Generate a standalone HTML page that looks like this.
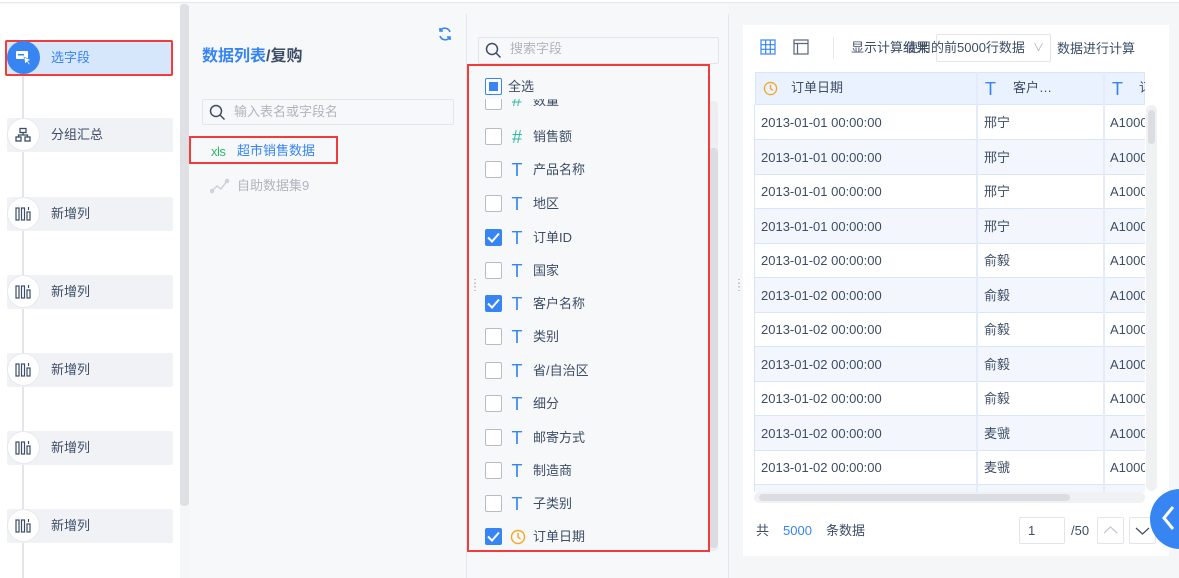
<!DOCTYPE html>
<html><head><meta charset="utf-8"><style>
*{margin:0;padding:0;box-sizing:border-box}
body{width:1179px;height:578px;overflow:hidden;background:#f5f6f8;font-family:"Liberation Sans","Noto Sans CJK SC",sans-serif;font-size:13px;line-height:16px;color:#3d4d66;position:relative}
.a{position:absolute}
.step{position:absolute;left:7px;width:166px;height:34px;background:#f1f2f6;border-radius:2px}
.step span{position:absolute;left:44px;top:9px;font-size:13px;color:#3d4d66}
.circ{position:absolute;left:7px;width:33px;height:33px;border-radius:50%;background:#fff;border:1px solid #e6e8ee}
.cb{position:absolute;left:485px;width:17px;height:17px;border:1px solid #b8bcc6;border-radius:2px;background:#fff}
.cb.on{background:#3685f2;border-color:#3685f2}
.fi{position:absolute;left:510px;font-size:18px;line-height:20px;color:#3685f2;width:14px;text-align:center}
.ft{position:absolute;left:533px;font-size:13px;color:#3d4d66}
.row{position:absolute;left:755px;width:390px;height:35px;border-bottom:1px solid #d9e6f7;font-size:13px;color:#3d4d66}
.row div{position:absolute;top:10px}
</style></head><body>
<div class="a" style="left:0;top:0;width:1179px;height:3px;background:#fff;border-bottom:1px solid #e6e8ee"></div>
<div class="a" style="left:0;top:4px;width:180px;height:574px;background:#fff"></div>
<div class="a" style="left:22px;top:70px;width:2px;height:508px;background:#e3e5ea"></div>
<div class="a" style="left:180px;top:4px;width:9px;height:502px;background:#dfe0e4;border-radius:4px"></div>
<div class="step" style="top:40px;background:#d6e6fb;border:2px solid #f23b3b;left:5px;width:168px;height:36px"><span style="color:#3685f2;left:44px;top:8px">选字段</span></div>
<div class="a" style="left:7px;top:41px;width:33px;height:33px;border-radius:50%;background:#3685f2"></div>
<svg class="a" style="left:15px;top:49px" width="18" height="18" viewBox="0 0 18 18"><rect x="1" y="2" width="12" height="8" rx="1" fill="#fff"/><rect x="3" y="5" width="6" height="1.5" fill="#3685f2"/><path d="M9 8l7 3-3 1 2 3-1 1-2-3-2 2z" fill="#fff" stroke="#3685f2" stroke-width=".6"/></svg>
<div class="step" style="top:118px"><span>分组汇总</span></div>
<div class="circ" style="top:118px"></div>
<svg class="a" style="left:15px;top:127px" width="16" height="16" viewBox="0 0 16 16" fill="none" stroke="#3d4d66" stroke-width="1.3"><rect x="5" y="1.5" width="6" height="4"/><rect x="1" y="10" width="5" height="4"/><rect x="10" y="10" width="5" height="4"/><path d="M3.5 10V8h9v2M8 5.5V8"/></svg>
<div class="step" style="top:197px"><span>新增列</span></div>
<div class="step" style="top:275px"><span>新增列</span></div>
<div class="step" style="top:353px"><span>新增列</span></div>
<div class="step" style="top:431px"><span>新增列</span></div>
<div class="step" style="top:509px"><span>新增列</span></div>
<div class="circ" style="top:197px"></div><div class="circ" style="top:275px"></div><div class="circ" style="top:353px"></div><div class="circ" style="top:431px"></div><div class="circ" style="top:509px"></div>
<svg class="a" style="left:15px;top:206px" width="17" height="16" viewBox="0 0 17 16" fill="none" stroke="#3d4d66" stroke-width="1.2"><rect x="1" y="2" width="3" height="12"/><rect x="6.5" y="2" width="3" height="12"/><rect x="12" y="6" width="3" height="8"/><path d="M13.5 1v3"/></svg>
<svg class="a" style="left:15px;top:284px" width="17" height="16" viewBox="0 0 17 16" fill="none" stroke="#3d4d66" stroke-width="1.2"><rect x="1" y="2" width="3" height="12"/><rect x="6.5" y="2" width="3" height="12"/><rect x="12" y="6" width="3" height="8"/><path d="M13.5 1v3"/></svg>
<svg class="a" style="left:15px;top:362px" width="17" height="16" viewBox="0 0 17 16" fill="none" stroke="#3d4d66" stroke-width="1.2"><rect x="1" y="2" width="3" height="12"/><rect x="6.5" y="2" width="3" height="12"/><rect x="12" y="6" width="3" height="8"/><path d="M13.5 1v3"/></svg>
<svg class="a" style="left:15px;top:440px" width="17" height="16" viewBox="0 0 17 16" fill="none" stroke="#3d4d66" stroke-width="1.2"><rect x="1" y="2" width="3" height="12"/><rect x="6.5" y="2" width="3" height="12"/><rect x="12" y="6" width="3" height="8"/><path d="M13.5 1v3"/></svg>
<svg class="a" style="left:15px;top:518px" width="17" height="16" viewBox="0 0 17 16" fill="none" stroke="#3d4d66" stroke-width="1.2"><rect x="1" y="2" width="3" height="12"/><rect x="6.5" y="2" width="3" height="12"/><rect x="12" y="6" width="3" height="8"/><path d="M13.5 1v3"/></svg>
<div class="a" style="left:190px;top:4px;width:276px;height:574px;background:#f7f8fa"></div>
<div class="a" style="left:466px;top:14px;width:1px;height:564px;background:#e6e8ee"></div>
<svg class="a" style="left:437px;top:26px" width="16" height="16" viewBox="0 0 16 16" fill="none" stroke="#3685f2" stroke-width="1.6"><path d="M13 6a5.5 5.5 0 0 0-10-1M3 10a5.5 5.5 0 0 0 10 1"/><path d="M3 2v3h3M13 14v-3h-3"/></svg>
<div class="a" style="left:202px;top:47px;font-size:16px;line-height:20px;font-weight:bold;color:#3685f2">数据列表<span style="color:#3d4d66">/复购</span></div>
<div class="a" style="left:202px;top:99px;width:252px;height:26px;border:1px solid #e3e5ea;background:#f7f8fa;border-radius:2px"></div>
<svg class="a" style="left:209px;top:104px" width="17" height="17" viewBox="0 0 17 17" fill="none" stroke="#3d4d66" stroke-width="1.5"><circle cx="7" cy="7" r="5.5"/><path d="M11 11l4.5 4.5"/></svg>
<div class="a" style="left:234px;top:104px;color:#b0b4bd">输入表名或字段名</div>
<div class="a" style="left:189px;top:136px;width:149px;height:28px;border:2px solid #f23b3b"></div>
<div class="a" style="left:211px;top:144px;font-size:13px;color:#2fb96a;letter-spacing:-0.5px">xls</div>
<div class="a" style="left:237px;top:143px;color:#3685f2">超市销售数据</div>
<svg class="a" style="left:210px;top:178px" width="20" height="16" viewBox="0 0 20 16" fill="none" stroke="#cfd2d8" stroke-width="1.5"><path d="M2 13l5-5 4 3 6-8"/><circle cx="2" cy="13" r="1.5" fill="#cfd2d8"/><circle cx="17" cy="3" r="1.5" fill="#cfd2d8"/></svg>
<div class="a" style="left:237px;top:178px;color:#b0b4bd">自助数据集9</div>
<div class="a" style="left:467px;top:4px;width:262px;height:574px;background:#f7f8fa"></div>
<div class="a" style="left:728px;top:14px;width:1px;height:564px;background:#e6e8ee"></div>
<div class="a" style="left:478px;top:37px;width:241px;height:27px;border:1px solid #e3e5ea;border-radius:2px"></div>
<svg class="a" style="left:485px;top:42px" width="17" height="17" viewBox="0 0 17 17" fill="none" stroke="#3d4d66" stroke-width="1.5"><circle cx="7" cy="7" r="5.5"/><path d="M11 11l4.5 4.5"/></svg>
<div class="a" style="left:510px;top:41px;color:#b0b4bd">搜索字段</div>
<div class="a" style="left:709px;top:101px;width:9px;height:450px;background:#eceef1;border-radius:4px"></div>
<div class="a" style="left:709px;top:148px;width:9px;height:400px;background:#dcdde2;border-radius:4px"></div>
<div class="a" style="left:467px;top:64px;width:243px;height:488px;border:2px solid #f23b3b"></div>
<div class="cb" style="top:78px;border-color:#3685f2"></div><div class="a" style="left:489px;top:82px;width:9px;height:9px;background:#3685f2"></div>
<div class="ft" style="left:508px;top:79px">全选</div>
<div class="a" style="left:469px;top:99px;width:239px;height:15px;overflow:hidden"><div class="cb" style="left:16px;top:-6px"></div><div class="fi" style="left:41px;top:-9px;color:#2fb9a0">#</div><div class="ft" style="left:64px;top:-6px">数量</div></div>
<div class="cb" style="top:128px"></div><div class="fi" style="top:127px;color:#2fb9a0">#</div><div class="ft" style="top:129px">销售额</div>
<div class="cb" style="top:161px"></div><div class="fi" style="top:160px">T</div><div class="ft" style="top:162px">产品名称</div>
<div class="cb" style="top:195px"></div><div class="fi" style="top:194px">T</div><div class="ft" style="top:196px">地区</div>
<div class="cb on" style="top:229px"></div><div class="fi" style="top:228px">T</div><div class="ft" style="top:230px">订单ID</div>
<div class="cb" style="top:262px"></div><div class="fi" style="top:261px">T</div><div class="ft" style="top:263px">国家</div>
<div class="cb on" style="top:295px"></div><div class="fi" style="top:294px">T</div><div class="ft" style="top:296px">客户名称</div>
<div class="cb" style="top:328px"></div><div class="fi" style="top:327px">T</div><div class="ft" style="top:329px">类别</div>
<div class="cb" style="top:362px"></div><div class="fi" style="top:361px">T</div><div class="ft" style="top:363px">省/自治区</div>
<div class="cb" style="top:395px"></div><div class="fi" style="top:394px">T</div><div class="ft" style="top:396px">细分</div>
<div class="cb" style="top:429px"></div><div class="fi" style="top:428px">T</div><div class="ft" style="top:430px">邮寄方式</div>
<div class="cb" style="top:462px"></div><div class="fi" style="top:461px">T</div><div class="ft" style="top:463px">制造商</div>
<div class="cb" style="top:495px"></div><div class="fi" style="top:494px">T</div><div class="ft" style="top:496px">子类别</div>
<div class="cb on" style="top:528px"></div><div class="ft" style="top:529px">订单日期</div>
<svg class="a" style="left:510px;top:529px" width="16" height="16" viewBox="0 0 16 16" fill="none" stroke="#f5a623" stroke-width="1.4"><circle cx="8" cy="8" r="6.5"/><path d="M8 4v4l2.5 2"/></svg>
<svg class="a" style="left:487px;top:232px" width="13" height="11"><path d="M1 5.5l4 4 7-8" fill="none" stroke="#fff" stroke-width="2"/></svg>
<svg class="a" style="left:487px;top:298px" width="13" height="11"><path d="M1 5.5l4 4 7-8" fill="none" stroke="#fff" stroke-width="2"/></svg>
<svg class="a" style="left:487px;top:531px" width="13" height="11"><path d="M1 5.5l4 4 7-8" fill="none" stroke="#fff" stroke-width="2"/></svg>
<div class="a" style="left:470px;top:282px;font-size:10px;color:#999;line-height:4px">⋮<br>⋮</div>
<div class="a" style="left:734px;top:282px;font-size:10px;color:#999;line-height:4px">⋮<br>⋮</div>
<div class="a" style="left:743px;top:25px;width:426px;height:531px;background:#fff"></div>
<svg class="a" style="left:760px;top:39px" width="16" height="16" viewBox="0 0 16 16" fill="none" stroke="#3685f2" stroke-width="1.2"><rect x="1" y="1" width="14" height="14"/><path d="M1 5.7h14M1 10.3h14M5.7 1v14M10.3 1v14"/></svg>
<svg class="a" style="left:793px;top:39px" width="16" height="16" viewBox="0 0 16 16" fill="none" stroke="#5a6577" stroke-width="1.2"><rect x="1" y="1" width="14" height="14"/><path d="M1 4.5h14M4.5 4.5v10.5"/></svg>
<div class="a" style="left:833px;top:37px;width:1px;height:22px;background:#e6e8ee"></div>
<div class="a" style="left:851px;top:40px;color:#3d4d66">显示计算结果</div>
<div class="a" style="left:936px;top:34px;width:115px;height:28px;border:1px solid #e3e5ea;border-radius:2px;background:#fff"></div>
<div class="a" style="left:905px;top:40px;color:#3d4d66">使用的前5000行数据</div>
<div class="a" style="left:1033px;top:40px;color:#b0b4bd;font-size:11px">∨</div>
<div class="a" style="left:1057px;top:41px;color:#3d4d66">数据进行计算</div>
<div class="a" style="left:755px;top:72px;width:390px;height:420px;overflow:hidden">
<div class="a" style="left:0;top:0;width:390px;height:33px;background:#e9f2fe;border:1px solid #d9e6f7"></div>
<div class="a" style="left:221px;top:0;width:2px;height:420px;background:#e3ecf8;z-index:2"></div>
<div class="a" style="left:348px;top:0;width:2px;height:420px;background:#e3ecf8;z-index:2"></div>
<svg class="a" style="left:8px;top:9px" width="15" height="15" viewBox="0 0 16 16" fill="none" stroke="#f5a623" stroke-width="1.4"><circle cx="8" cy="8" r="6.5"/><path d="M8 4v4l2.5 2"/></svg>
<div class="a" style="left:36px;top:8px">订单日期</div>
<div class="a" style="left:230px;top:7px;color:#3685f2;font-size:18px;line-height:20px">T</div><div class="a" style="left:258px;top:8px">客户…</div>
<div class="a" style="left:357px;top:7px;color:#3685f2;font-size:18px;line-height:20px">T</div><div class="a" style="left:384px;top:8px">订</div>
</div>
<div class="a" style="left:755px;top:105px;width:390px;height:387px;overflow:hidden">
<div class="row" style="left:0;top:0"><div style="left:6px">2013-01-01 00:00:00</div><div style="left:229px">邢宁</div><div style="left:355px">A1000</div></div>
<div class="row" style="left:0;top:34.5px;background:#f3f7fd"><div style="left:6px">2013-01-01 00:00:00</div><div style="left:229px">邢宁</div><div style="left:355px">A1000</div></div>
<div class="row" style="left:0;top:69px"><div style="left:6px">2013-01-01 00:00:00</div><div style="left:229px">邢宁</div><div style="left:355px">A1000</div></div>
<div class="row" style="left:0;top:103.5px;background:#f3f7fd"><div style="left:6px">2013-01-01 00:00:00</div><div style="left:229px">邢宁</div><div style="left:355px">A1000</div></div>
<div class="row" style="left:0;top:138px"><div style="left:6px">2013-01-02 00:00:00</div><div style="left:229px">俞毅</div><div style="left:355px">A1000</div></div>
<div class="row" style="left:0;top:172.5px;background:#f3f7fd"><div style="left:6px">2013-01-02 00:00:00</div><div style="left:229px">俞毅</div><div style="left:355px">A1000</div></div>
<div class="row" style="left:0;top:207px"><div style="left:6px">2013-01-02 00:00:00</div><div style="left:229px">俞毅</div><div style="left:355px">A1000</div></div>
<div class="row" style="left:0;top:241.5px;background:#f3f7fd"><div style="left:6px">2013-01-02 00:00:00</div><div style="left:229px">俞毅</div><div style="left:355px">A1000</div></div>
<div class="row" style="left:0;top:276px"><div style="left:6px">2013-01-02 00:00:00</div><div style="left:229px">俞毅</div><div style="left:355px">A1000</div></div>
<div class="row" style="left:0;top:310.5px;background:#f3f7fd"><div style="left:6px">2013-01-02 00:00:00</div><div style="left:229px">麦虢</div><div style="left:355px">A1000</div></div>
<div class="row" style="left:0;top:345px"><div style="left:6px">2013-01-02 00:00:00</div><div style="left:229px">麦虢</div><div style="left:355px">A1000</div></div>
<div class="row" style="left:0;top:379.5px;background:#f3f7fd"></div>
</div>
<div class="a" style="left:754px;top:105px;width:1px;height:387px;background:#d9e6f7"></div>
<div class="a" style="left:1146px;top:105px;width:11px;height:386px;background:#f0f1f3;border-radius:5px"></div>
<div class="a" style="left:1148px;top:110px;width:7px;height:34px;background:#dcdde2;border-radius:4px"></div>
<div class="a" style="left:754px;top:492px;width:391px;height:11px;background:#f0f1f3;border-radius:5px"></div>
<div class="a" style="left:759px;top:494px;width:311px;height:7px;background:#dcdde2;border-radius:4px"></div>
<div class="a" style="left:756px;top:523px">共</div>
<div class="a" style="left:783px;top:523px;color:#3685f2">5000</div>
<div class="a" style="left:826px;top:523px">条数据</div>
<div class="a" style="left:1019px;top:517px;width:46px;height:27px;border:1px solid #e3e5ea;border-radius:2px;padding:5px 8px">1</div>
<div class="a" style="left:1071px;top:523px">/50</div>
<div class="a" style="left:1097px;top:517px;width:27px;height:27px;border:1px solid #e3e5ea;border-radius:2px"></div>
<svg class="a" style="left:1103px;top:525px" width="15" height="10"><path d="M1 8l6.5-6 6.5 6" fill="none" stroke="#c5c8cf" stroke-width="1.2"/></svg>
<div class="a" style="left:1129px;top:517px;width:27px;height:27px;border:1px solid #e3e5ea;border-radius:2px"></div>
<svg class="a" style="left:1135px;top:526px" width="15" height="10"><path d="M1 2l6.5 6 6.5-6" fill="none" stroke="#3d4d66" stroke-width="1.2"/></svg>
<div class="a" style="left:1150px;top:489px;width:60px;height:60px;border-radius:50%;background:#3685f2"></div>
<svg class="a" style="left:1160px;top:505px" width="16" height="26"><path d="M13 2L4 13l9 11" fill="none" stroke="#fff" stroke-width="3"/></svg>
</body></html>
